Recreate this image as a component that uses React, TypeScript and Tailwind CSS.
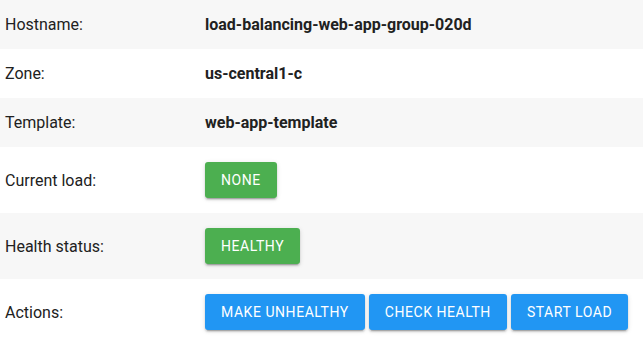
import React from 'react';

const rows: { label: string; value: string }[] = [
  { label: 'Hostname:', value: 'load-balancing-web-app-group-020d' },
  { label: 'Zone:', value: 'us-central1-c' },
  { label: 'Template:', value: 'web-app-template' },
];

const btn =
  'h-9 px-4 rounded-[3px] text-white text-[14px] tracking-[0.55px] uppercase shadow-[0_3px_1px_-2px_rgba(0,0,0,0.2),0_2px_2px_0_rgba(0,0,0,0.14),0_1px_5px_0_rgba(0,0,0,0.12)]';

export default function App() {
  return (
    <div className="w-[643px] min-h-[354px] bg-white text-[#212121] font-['Roboto',sans-serif] text-[16px] leading-[19px]">
      {rows.map((r, i) => (
        <div key={r.label} className={`flex py-[15px] ${i % 2 === 0 ? 'bg-[#f7f7f7]' : 'bg-white'}`}>
          <div className="w-[205px] pl-[5px]">{r.label}</div>
          <div className="font-bold">{r.value}</div>
        </div>
      ))}

      <div className="flex items-center py-[15px] bg-white">
        <div className="w-[205px] pl-[5px]">Current load:</div>
        <button className={`${btn} bg-[#4caf50]`}>None</button>
      </div>

      <div className="flex items-center py-[15px] bg-[#f7f7f7]">
        <div className="w-[205px] pl-[5px]">Health status:</div>
        <button className={`${btn} bg-[#4caf50]`}>Healthy</button>
      </div>

      <div className="flex items-center py-[15px] bg-white">
        <div className="w-[205px] pl-[5px]">Actions:</div>
        <div className="flex gap-1">
          <button className={`${btn} bg-[#2196f3]`}>Make unhealthy</button>
          <button className={`${btn} bg-[#2196f3]`}>Check health</button>
          <button className={`${btn} bg-[#2196f3]`}>Start load</button>
        </div>
      </div>
    </div>
  );
}
